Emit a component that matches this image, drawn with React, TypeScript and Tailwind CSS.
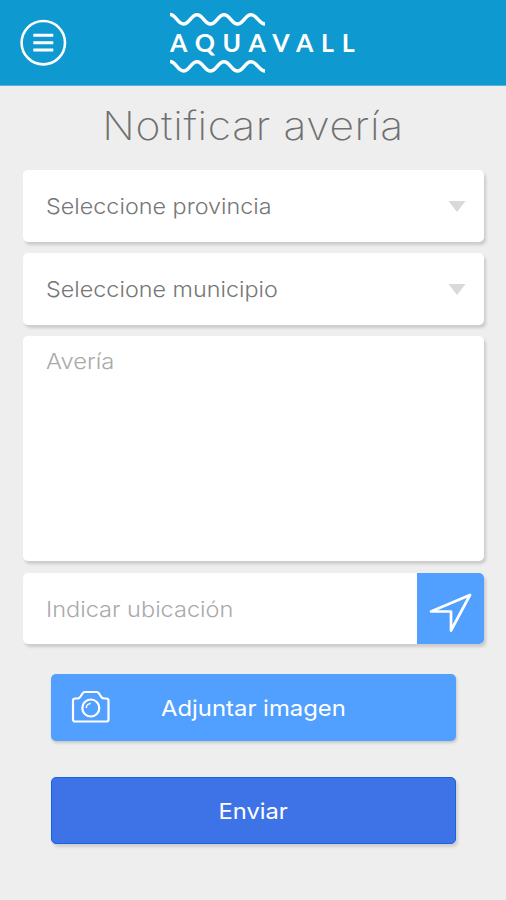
import React from 'react';

const Wave = () => (
  <svg className="block h-[16px] w-[98px]" viewBox="0 0 98 16" fill="none" stroke="white" strokeWidth="3.5">
    <path d="M1 3.500 C7 3.500 8.500 13 14.500 13 C20.500 13 22 3.800 28 3.800 C34 3.800 35.500 13 41.500 13 C47.500 13 49 3.800 55 3.800 C61 3.800 62.500 13 68.500 13 C74.500 13 76 3.800 82 3.800 C88 3.800 90 13 96 13" />
  </svg>
);

const SelectField = ({ label }: { label: string }) => (
  <button className="flex h-[72px] w-full items-center justify-between rounded-[5px] bg-white pl-[23px] pr-[18px] shadow-[2px_3px_3px_rgba(0,0,0,0.15)]">
    <span className="origin-left scale-x-[1.062] whitespace-nowrap font-light text-[#777777]">{label}</span>
    <svg className="h-[11px] w-[18px]" viewBox="0 0 18 11" fill="#d9d9d9">
      <path d="M.5 0h17L9 11z" />
    </svg>
  </button>
);

export default function App() {
  return (
    <div className="h-[900px] w-[506px] overflow-hidden bg-[#eeeeee] font-['Inter','Liberation_Sans',sans-serif] text-[22px] leading-none">
      <header className="flex h-[86px] items-start border-b border-[#58b4da] bg-[#0e99d0]">
        <button className="ml-[20px] mt-[19px] size-[47px]" aria-label="Menú">
          <svg className="block size-[47px]" viewBox="0 0 47 47" fill="white">
            <circle cx="23.3" cy="23.7" r="21.700" fill="none" stroke="white" strokeWidth="2.600" />
            <path d="M13.300 14.800h20v3h-20zM13.300 22.200h20v3h-20zM13.300 29.500h20v3h-20z" />
          </svg>
        </button>
        <div className="ml-[102px] mt-[11px] w-[200px] text-white">
          <Wave />
          <div className="flex h-[31px] origin-left scale-x-[1.04] items-center whitespace-nowrap pl-[1px] pt-[1px] font-['Lato',sans-serif] text-[24px] font-bold tracking-[7.5px]">AQUAVALL</div>
          <Wave />
        </div>
      </header>
      <main className="px-[23px]">
        <h1 className="flex h-[84px] scale-x-[1.09] items-center justify-center whitespace-nowrap pb-[5px] text-[39px] font-extralight tracking-[0.6px] text-[#707070]">Notificar avería</h1>
        <form className="flex w-[461px] flex-col">
          <div className="flex flex-col gap-[11px]">
            <SelectField label="Seleccione provincia" />
            <SelectField label="Seleccione municipio" />
            <div className="h-[225px] rounded-[5px] bg-white pl-[23px] pt-[14px] font-light text-[#aaaaaa] shadow-[2px_3px_3px_rgba(0,0,0,0.15)]">
              <span className="inline-block origin-left scale-x-[1.08]">Avería</span>
            </div>
          </div>
          <div className="mt-[12px] flex h-[71px] overflow-hidden rounded-[5px] bg-white shadow-[2px_3px_3px_rgba(0,0,0,0.15)]">
            <div className="flex flex-1 items-center pl-[23px] font-light text-[#aaaaaa]">
              <span className="origin-left scale-x-[1.07] whitespace-nowrap">Indicar ubicación</span>
            </div>
            <div className="w-[67px] bg-[#519fff]">
              <svg className="h-[71px] w-[67px]" viewBox="0 0 67 71" fill="none" stroke="white" strokeWidth="2.7" strokeLinejoin="round">
                <path d="M14 38.500 53 22 34 57.500V38.500z" />
              </svg>
            </div>
          </div>
          <button className="mx-[28px] mt-[30px] flex h-[67px] items-center rounded-[5px] bg-[#519fff] pl-[20px] text-white shadow-[1px_2px_3px_rgba(0,0,0,0.17)]">
            <svg className="-mt-[1px] h-[34px] w-[40px]" viewBox="0 0 40 34" fill="none" stroke="white" strokeWidth="2.2" strokeLinejoin="round">
              <path d="M4 8.500H6.500Q8.500 8.500 9.500 6.500L11.500 3.500Q12.300 2 14 2H25.500Q27.200 2 28 3.500L30 6.500Q31 8.500 33 8.500H35.500a2 2 0 0 1 2 2V29.500a2 2 0 0 1-2 2H4a2 2 0 0 1-2-2V10.500a2 2 0 0 1 2-2Z" />
              <circle cx="19.8" cy="18" r="8.500" />
              <path d="M15.300 18a4.500 4.500 0 0 1 4.500-4.500" strokeWidth="1.500" />
            </svg>
            <span className="ml-[50px] origin-left scale-x-[1.085] whitespace-nowrap">Adjuntar imagen</span>
          </button>
          <button className="mx-[28px] mt-[36px] flex h-[67px] items-center justify-center rounded-[5px] border border-[#1464de] bg-[#3e73e8] text-white shadow-[2px_3px_3px_rgba(0,0,0,0.13)]">
            <span className="scale-x-[1.08]">Enviar</span>
          </button>
        </form>
      </main>
    </div>
  );
}
